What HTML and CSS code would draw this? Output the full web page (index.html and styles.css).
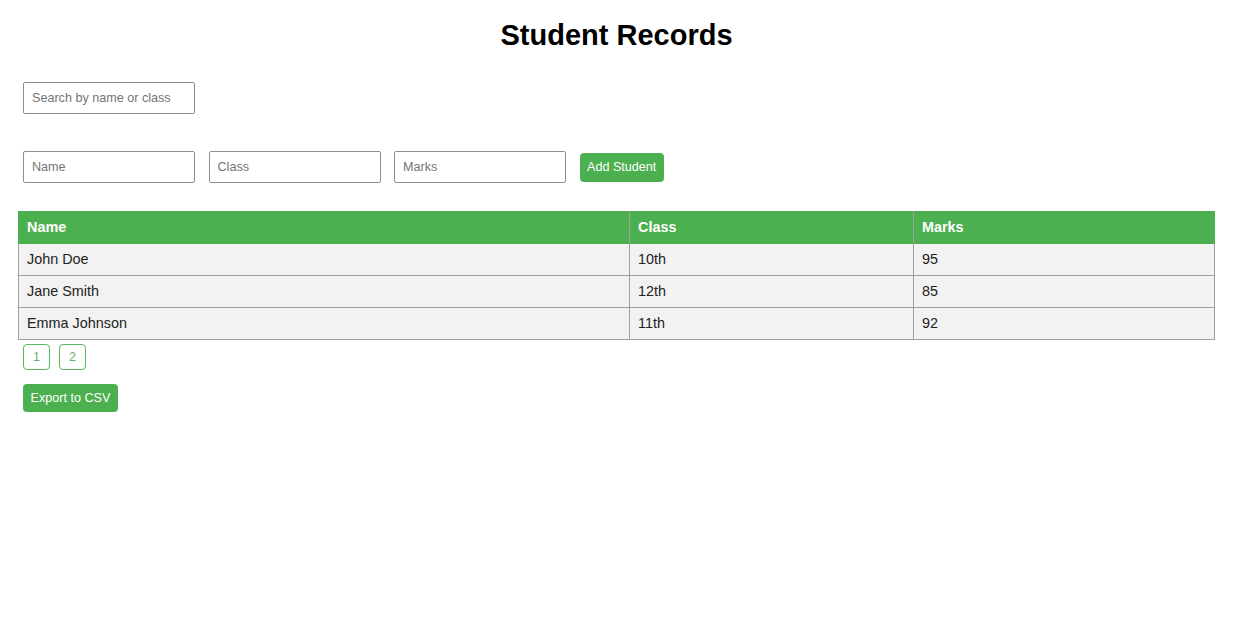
FILE: index.html
```html
<!DOCTYPE html>
<html lang="en">
<head>
<meta charset="utf-8">
<title>Student Records</title>
<link rel="stylesheet" href="styles.css">
</head>
<body>
<h1 class="title">Student Records</h1>
<div class="search-row">
  <input class="field" type="text" placeholder="Search by name or class">
</div>
<div class="add-row">
  <input class="field" type="text" placeholder="Name">
  <input class="field" type="text" placeholder="Class">
  <input class="field" type="text" placeholder="Marks">
  <button class="btn">Add Student</button>
</div>
<table class="records">
  <colgroup>
    <col class="col-name">
    <col class="col-class">
    <col class="col-marks">
  </colgroup>
  <thead>
    <tr><th>Name</th><th>Class</th><th>Marks</th></tr>
  </thead>
  <tbody>
    <tr><td>John Doe</td><td>10th</td><td>95</td></tr>
    <tr><td>Jane Smith</td><td>12th</td><td>85</td></tr>
    <tr><td>Emma Johnson</td><td>11th</td><td>92</td></tr>
  </tbody>
</table>
<div class="pagination">
  <button class="page">1</button>
  <button class="page">2</button>
</div>
<div class="export-row">
  <button class="btn btn-export">Export to CSV</button>
</div>
</body>
</html>
```
FILE: styles.css
```css
html, body {
  margin: 0;
  background: #ffffff;
}
body {
  padding: 0 19px 0 18px;
  font-family: "Liberation Sans", Arial, sans-serif;
  color: #222;
}
.title {
  margin: 19px 0 0;
  font-size: 29px;
  line-height: 33px;
  font-weight: bold;
  text-align: center;
  color: #000;
}
.search-row {
  display: flex;
  margin-top: 30px;
  padding-left: 5px;
}
.add-row {
  display: flex;
  align-items: center;
  gap: 13.5px;
  margin-top: 37px;
  padding-left: 5px;
}
.field {
  box-sizing: border-box;
  width: 172px;
  height: 32px;
  margin: 0;
  padding: 0 8px;
  border: 1px solid #8f8f8f;
  border-radius: 2px;
  font-family: "Liberation Sans", Arial, sans-serif;
  font-size: 12.6px;
  color: #222;
  background: #fff;
}
.field::placeholder {
  color: #757575;
}
.btn {
  box-sizing: border-box;
  height: 29px;
  margin: 0;
  padding: 0 7.5px;
  border: none;
  border-radius: 4px;
  background: #4caf50;
  color: #fff;
  font-family: "Liberation Sans", Arial, sans-serif;
  font-size: 12.6px;
}
.records {
  width: 100%;
  margin-top: 28px;
  border-collapse: collapse;
  table-layout: fixed;
  font-size: 14.4px;
  border: 1px solid #a0a0a0;
}
.col-name { width: 611px; }
.col-class { width: 284px; }
.records th,
.records td {
  padding: 7px 8px 8px;
  line-height: 16px;
  text-align: left;
  border: 1px solid #a0a0a0;
}
.records th {
  background: #4caf50;
  color: #fff;
  font-weight: bold;
  border-top-color: #4caf50;
  border-bottom-color: #4caf50;
}
.records th:first-child { border-left-color: #4caf50; }
.records th:last-child { border-right-color: #4caf50; }
.records td {
  background: #f2f2f2;
  color: #222;
}
.pagination {
  display: flex;
  gap: 9px;
  margin-top: 4px;
  padding-left: 5px;
}
.page {
  box-sizing: border-box;
  width: 27px;
  height: 26px;
  margin: 0;
  padding: 0;
  border: 1px solid #5cb860;
  border-radius: 4px;
  background: #fff;
  color: #6aae6d;
  font-family: "Liberation Sans", Arial, sans-serif;
  font-size: 12.6px;
}
.export-row {
  display: flex;
  margin-top: 14px;
  padding-left: 5px;
}
.btn-export {
  height: 28px;
}
```
